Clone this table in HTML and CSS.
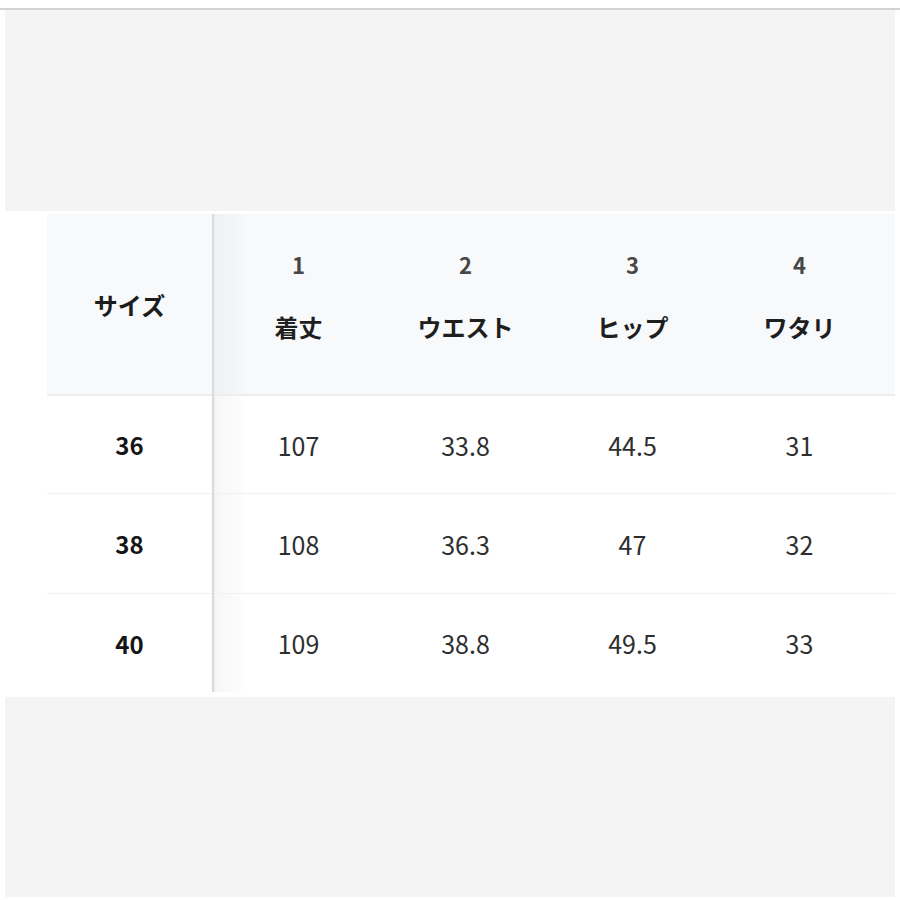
FILE: index.html
```html
<!DOCTYPE html>
<html lang="ja">
<head>
<meta charset="utf-8">
<title>サイズ表</title>
<link rel="stylesheet" href="styles.css">
</head>
<body>
<div class="rule"></div>
<div class="band band-top"></div>
<div class="size-table">
  <div class="cell head head-left">サイズ</div>
  <div class="divider"></div>
  <div class="cell head first"><span class="num">1</span><span class="label">着丈</span></div>
  <div class="cell head"><span class="num">2</span><span class="label">ウエスト</span></div>
  <div class="cell head"><span class="num">3</span><span class="label">ヒップ</span></div>
  <div class="cell head"><span class="num">4</span><span class="label">ワタリ</span></div>
  <div class="cell head tail"></div>

  <div class="cell row-left line">36</div>
  <div class="cell val first line">107</div>
  <div class="cell val line">33.8</div>
  <div class="cell val line">44.5</div>
  <div class="cell val line">31</div>
  <div class="cell val tail line"></div>

  <div class="cell row-left line">38</div>
  <div class="cell val first line">108</div>
  <div class="cell val line">36.3</div>
  <div class="cell val line">47</div>
  <div class="cell val line">32</div>
  <div class="cell val tail line"></div>

  <div class="cell row-left">40</div>
  <div class="cell val first">109</div>
  <div class="cell val">38.8</div>
  <div class="cell val">49.5</div>
  <div class="cell val">33</div>
  <div class="cell val tail"></div>
</div>
<div class="band band-bottom"></div>
</body>
</html>
```

FILE: styles.css
```css
html, body {
  margin: 0;
  padding: 0;
  background: #ffffff;
}

body {
  font-family: "Noto Sans CJK JP", "Noto Sans", sans-serif;
  color: #222;
}

.rule {
  margin-top: 8px;
  height: 2px;
  background: #d3d3d3;
}

.band {
  margin: 0 5px;
  background: #f4f4f4;
}

.band-top {
  height: 201px;
}

.band-bottom {
  margin-top: 5px;
  height: 200px;
}

.size-table {
  margin: 3px 5px 0 47px;
  display: grid;
  grid-template-columns: 165px 3px repeat(4, 167px) 1fr;
  grid-template-rows: 182px 98px 100px 98px;
}

.cell {
  display: flex;
  align-items: center;
  justify-content: center;
}

.head {
  background: #f8f9fb;
  border-bottom: 2px solid #eceef0;
  box-sizing: border-box;
}

.head-left {
  font-size: 24px;
  font-weight: 700;
  color: #1c1c1c;
}

.divider {
  grid-row: 1 / -1;
  grid-column: 2;
  background: linear-gradient(to right, #dadada 0, #dadada 2px, #eceef0 2px);
}

.head.first,
.head:not(.head-left):not(.tail) {
  flex-direction: column;
  justify-content: flex-start;
  padding-top: 35px;
}

.head .num {
  font-size: 22px;
  line-height: 30px;
  font-weight: 700;
  color: #474747;
}

.head .label {
  margin-top: 31px;
  font-size: 24px;
  line-height: 34px;
  font-weight: 700;
  color: #1e1e1e;
}

.first {
  background-image: linear-gradient(to right, rgba(0, 0, 0, 0.035), rgba(0, 0, 0, 0) 34px);
}

.row-left {
  font-size: 24px;
  font-weight: 700;
  color: #151515;
}

.val {
  font-size: 25px;
  font-weight: 400;
  color: #2e2e2e;
}

.line {
  border-bottom: 1px solid #f1f1f1;
  box-sizing: border-box;
}
```
